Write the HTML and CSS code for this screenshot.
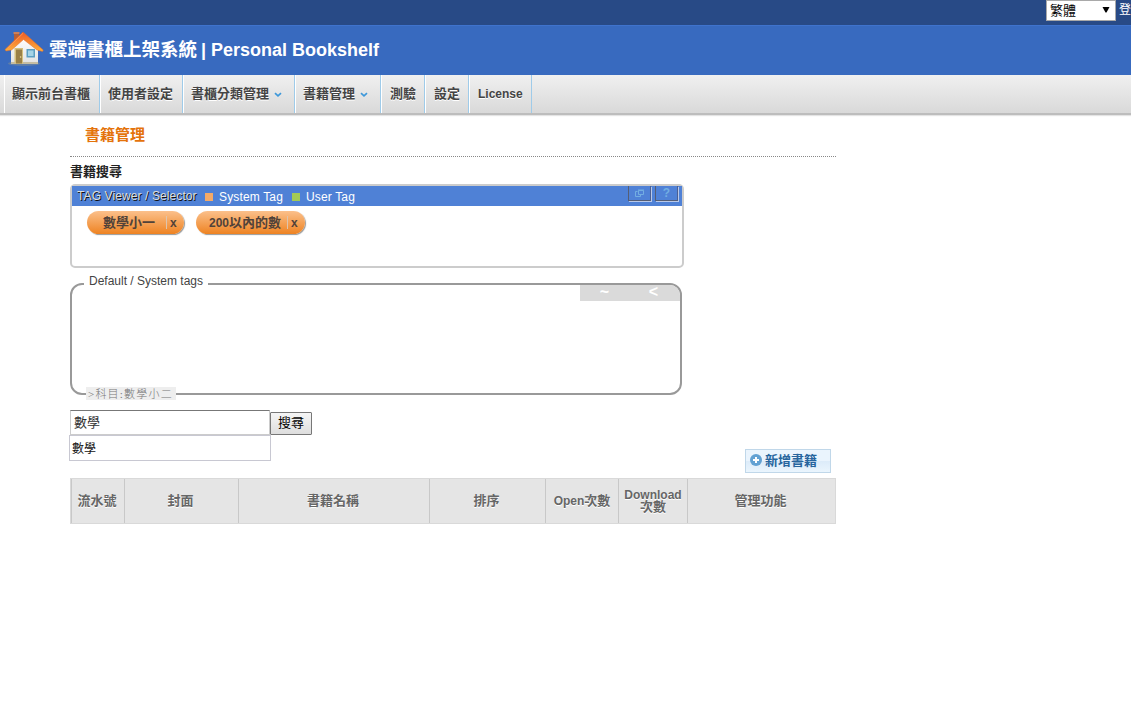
FILE: index.html
```html
<!DOCTYPE html>
<html lang="zh-Hant">
<head>
<meta charset="utf-8">
<title>雲端書櫃上架系統 | Personal Bookshelf</title>
<link rel="stylesheet" href="styles.css">
</head>
<body>
<div class="topbar">
  <div class="lang"><span>繁體</span><svg width="8" height="7" viewBox="0 0 8 7"><path d="M.5 1h7L4.500 6.500h-1z" fill="#000"/></svg></div>
  <a class="login">登</a>
</div>
<header class="header">
  <svg class="logo" width="40" height="36" viewBox="0 0 40 36">
    <defs>
      <linearGradient id="roof" x1="0" y1="0" x2="0" y2="1"><stop offset="0" stop-color="#ee5a24"/><stop offset="1" stop-color="#ffb13c"/></linearGradient>
      <linearGradient id="wall" x1="0" y1="0" x2="0" y2="1"><stop offset="0" stop-color="#fff"/><stop offset="1" stop-color="#e2e2e2"/></linearGradient>
    </defs>
    <ellipse cx="20" cy="32.500" rx="16" ry="2.500" fill="#6f86a0" opacity=".7"/>
    <path d="M10 2h5v9h-5z" fill="#b5603a"/><path d="M9.500 1h6v2h-6z" fill="#cc805a"/>
    <path d="M7 17L20 6l14 12v14.500H7z" fill="url(#wall)"/>
    <path d="M7 31h27v2H7z" fill="#c5bda3"/>
    <path d="M10.500 17h8.500v15.500h-8.500z" fill="#d6c07c"/><path d="M12 18.500h6v14h-6z" fill="#9a8047"/><circle cx="16.600" cy="26" r=".8" fill="#f3df9b"/>
    <path d="M22.500 18h8.500v8.500h-8.500z" fill="#5b9fc2"/><path d="M24 19.500h5.500v5.500H24z" fill="#a5d3e6"/>
    <path d="M19 1L1 18.500l1 1.500 5.500-1L19.500 8.500 33 19l5.500 1.500 .8-1.500z" fill="url(#roof)" stroke="#df6a28" stroke-width=".5"/>
    <path d="M19 2.300L4 17" stroke="#ff9a60" stroke-width=".8" fill="none"/>
  </svg>
  <h1 class="brand"><span class="brand-zh">雲端書櫃上架系統</span> <span class="brand-en">| Personal Bookshelf</span></h1>
</header>
<nav class="nav">
  <a class="nav-item nav-first">顯示前台書櫃</a>
  <a class="nav-item nav-user">使用者設定</a>
  <a class="nav-item nav-category">書櫃分類管理<svg class="chevron" width="8" height="6" viewBox="0 0 8 6"><path d="M1 1.200l3 2.600 3-2.600" fill="none" stroke="#3d98da" stroke-width="1.700"/></svg></a>
  <a class="nav-item nav-books">書籍管理<svg class="chevron" width="8" height="6" viewBox="0 0 8 6"><path d="M1 1.200l3 2.600 3-2.600" fill="none" stroke="#3d98da" stroke-width="1.700"/></svg></a>
  <a class="nav-item nav-short">測驗</a>
  <a class="nav-item nav-short">設定</a>
  <a class="nav-item nav-license">License</a>
</nav>
<main class="content">
  <h2 class="page-title">書籍管理</h2>
  <h3 class="search-title">書籍搜尋</h3>
  <section class="viewer">
    <div class="viewer-bar">
      <span class="viewer-title">TAG Viewer / Selector</span>
      <i class="swatch swatch-system"></i><span class="key key-system">System Tag</span>
      <i class="swatch swatch-user"></i><span class="key">User Tag</span>
      <div class="viewer-tools">
        <span class="tool"><svg width="10" height="8" viewBox="0 0 10 8"><path d="M3.500 1.500h5v4h-5zM3 1h6M2.500 2.500h-2v5h5V6" fill="none" stroke="#73aee2"/></svg></span>
        <span class="tool">?</span>
      </div>
    </div>
    <div class="tags">
      <span class="tag tag-one"><span>數學小一</span><b class="tag-close">x</b></span>
      <span class="tag tag-two"><span><span class="tag-number">200</span>以內的數</span><b class="tag-close">x</b></span>
    </div>
  </section>
  <section class="defaults">
    <span class="defaults-title">Default / System tags</span>
    <div class="defaults-tools"><span>~</span><span>&lt;</span></div>
    <span class="defaults-path">&gt;科目:數學小二</span>
  </section>
  <div class="search">
    <div class="search-input">數學</div>
    <button class="search-button">搜尋</button>
  </div>
  <div class="below">
    <div class="suggest">數學</div>
    <a class="add"><svg width="12" height="12" viewBox="0 0 12 12"><circle cx="6" cy="6" r="6" fill="#62a1d3"/><path d="M6 3v6M3 6h6" stroke="#fff" stroke-width="2"/></svg>新增書籍</a>
  </div>
  <div class="table">
    <div>流水號</div><div>封面</div><div>書籍名稱</div><div>排序</div><div><span class="latin">Open</span>次數</div><div><span class="latin">Download</span><br>次數</div><div>管理功能</div>
  </div>
</main>
</body>
</html>
```
FILE: styles.css
```css
* { box-sizing: border-box; }
body {
  margin: 0;
  overflow: hidden;
  background: #fff;
  font: 12px "Liberation Sans", "Noto Sans CJK TC", sans-serif;
  color: #333;
}
svg { display: block; flex: none; }

.topbar {
  display: flex;
  justify-content: flex-end;
  height: 25px;
  background: #284a86;
}
.lang {
  display: flex;
  flex: none;
  align-items: center;
  justify-content: space-between;
  width: 70px;
  height: 21px;
  padding: 0 5px 2px 3px;
  border: 1px solid #a9a9a9;
  background: #fff;
  color: #000;
  font-size: 13px;
}
.login {
  width: 12px;
  margin-left: 3px;
  line-height: 20px;
  color: #fff;
  white-space: nowrap;
}
.header {
  display: flex;
  height: 50px;
  padding: 5px 0 0 4px;
  border-top: 1px solid #3f73cd;
  background: #386abf;
}
.brand {
  margin: 0 0 0 5px;
  font-size: 18px;
  line-height: 38px;
  color: #fff;
  white-space: nowrap;
}
.brand-zh { font-size: 18.500px; }
.brand-en { margin-left: -1px; }

.nav {
  display: flex;
  height: 40px;
  padding-left: 4px;
  border-bottom: 2px solid #bdbdbd;
  background: linear-gradient(#f0f0f0, #d9d9d9);
  box-shadow: 0 1px 1px #e4e4e4;
}
.nav-item {
  display: flex;
  height: 38px;
  padding-left: 7px;
  border-left: 1px solid #fff;
  border-right: 1px solid #9fcbe9;
  font-size: 13px;
  font-weight: bold;
  line-height: 37px;
  color: #444;
  text-shadow: 0 1px 0 #fff;
  white-space: nowrap;
}
.nav-first { width: 96px; }
.nav-user { width: 83px; }
.nav-category { width: 112px; }
.nav-books { width: 86px; }
.nav-short { width: 44px; padding-left: 8px; }
.nav-license { width: 63px; padding-left: 8px; font-size: 12px; line-height: 38px; }
.chevron { margin: 17px 0 0 5px; }

.content { width: 766px; margin-left: 70px; }
.page-title {
  height: 42px;
  margin: 0;
  padding-left: 15px;
  border-bottom: 1px dotted #888;
  font-size: 15px;
  line-height: 39px;
  color: #e4730b;
}
.search-title {
  height: 27px;
  margin: 0;
  font-size: 13px;
  line-height: 29px;
  color: #222;
}
.viewer {
  width: 614px;
  height: 84px;
  border: 2px solid #ccc;
  border-radius: 5px;
}
.viewer-bar {
  display: flex;
  height: 20px;
  padding-left: 5px;
  background: #4f81d6;
  color: #fff;
  line-height: 21px;
  white-space: nowrap;
}
.viewer-title {
  width: 128px;
  color: #ddd;
  letter-spacing: .1px;
  text-shadow: 1px 1px 0 #111;
}
.swatch { width: 8px; height: 8px; margin: 7px 6px 0 0; }
.swatch-system { background: #f5aa68; }
.swatch-user { background: #a3ca55; }
.key { line-height: 22px; letter-spacing: .15px; }
.key-system { width: 73px; }
.viewer-tools { display: flex; gap: 4px; margin: 0 4px 0 auto; }
.tool {
  display: flex;
  align-items: center;
  justify-content: center;
  width: 23px;
  height: 15px;
  border: 1px solid #555e75;
  border-top: 0;
  border-right-color: #4a5f92;
  box-shadow: 1px 1px 0 #b9c9e9;
  font-size: 12px;
  font-weight: bold;
  color: #73aee2;
}
.tags { display: flex; gap: 12px; padding: 5px 0 0 15px; }
.tag {
  display: flex;
  height: 23px;
  border-radius: 12px;
  background: linear-gradient(#fbc08b, #ee8322);
  box-shadow: 1px 1px 1px #999;
  font-size: 13px;
  font-weight: bold;
  line-height: 23px;
  color: #514239;
  white-space: nowrap;
}
.tag-one { width: 97px; padding-left: 16px; }
.tag-two { width: 109px; padding-left: 13px; }
.tag-number { font-size: 12px; }
.tag-close {
  width: 18px;
  height: 13px;
  margin: 5px 0 0 auto;
  padding-left: 3px;
  border-left: 1px solid #ddc4ad;
  font-size: 12px;
  line-height: 14px;
}

.defaults {
  position: relative;
  width: 612px;
  height: 112px;
  margin-top: 15px;
  border: 2px solid #999;
  border-radius: 12px;
}
.defaults-title {
  position: absolute;
  top: -13px;
  left: 12px;
  width: 124px;
  padding-left: 5px;
  background: #fff;
  line-height: 18px;
  color: #444;
  white-space: nowrap;
}
.defaults-tools {
  display: flex;
  width: 100px;
  height: 16px;
  margin-left: auto;
  border-top-right-radius: 10px;
  background: #dadada;
  color: #fff;
  font-size: 16px;
  font-weight: bold;
  line-height: 14px;
}
.defaults-tools span { width: 49px; text-align: center; }
.defaults-path {
  position: absolute;
  left: 14px;
  bottom: -7px;
  width: 90px;
  height: 13px;
  padding-left: 2px;
  background: #eee;
  font-family: "Liberation Serif", "Noto Sans CJK TC", serif;
  font-size: 11px;
  font-weight: 300;
  letter-spacing: 1.200px;
  line-height: 14px;
  color: #777;
  white-space: nowrap;
}

.search { display: flex; height: 25px; margin-top: 15px; }
.search-input {
  width: 200px;
  height: 25px;
  padding-left: 3px;
  border: 1px solid #ccc;
  border-top-color: #777;
  font-size: 13px;
  line-height: 23px;
}
.search-button {
  width: 42px;
  height: 23px;
  margin-top: 2px;
  padding: 0 0 1px;
  border: 1px solid #777;
  border-radius: 1px;
  background: linear-gradient(#f5f5f5, #dedede);
  font: 13px/20px "Liberation Sans", "Noto Sans CJK TC", sans-serif;
  color: #000;
}
.below {
  display: flex;
  justify-content: space-between;
  height: 43px;
  padding-right: 5px;
}
.suggest {
  width: 202px;
  height: 26px;
  margin-left: -1px;
  padding-left: 2px;
  border: 1px solid #c8c8d2;
  line-height: 26px;
  color: #111;
}
.add {
  display: flex;
  gap: 3px;
  width: 86px;
  height: 24px;
  margin-top: 14px;
  padding-left: 4px;
  border: 1px solid #c0d7e9;
  background: linear-gradient(#eaf4fd 50%, #dcebf9 50%, #eaf5fd);
  font-size: 13px;
  font-weight: bold;
  line-height: 22px;
  color: #27659d;
}
.add svg { margin-top: 4px; }
.table {
  display: grid;
  grid-template-columns: 54px 114px 191px 116px 73px 69px 147px;
  height: 46px;
  border: 1px solid #d9d9d9;
  background: #e5e5e5;
}
.table div {
  display: block;
  align-content: center;
  padding-right: 2px;
  border-right: 1px solid #c8c8c8;
  font-weight: bold;
  font-size: 13px;
  line-height: 12px;
  text-align: center;
  color: #666;
  text-shadow: 0 1px 0 #fff;
}
.table div:first-child { border-left: 1px solid #c8c8c8; }
.table div:last-child { border-right: 0; }
.table div:nth-child(5), .table div:nth-child(6) { padding-right: 0; }
.latin { font-size: 12px; }
```
